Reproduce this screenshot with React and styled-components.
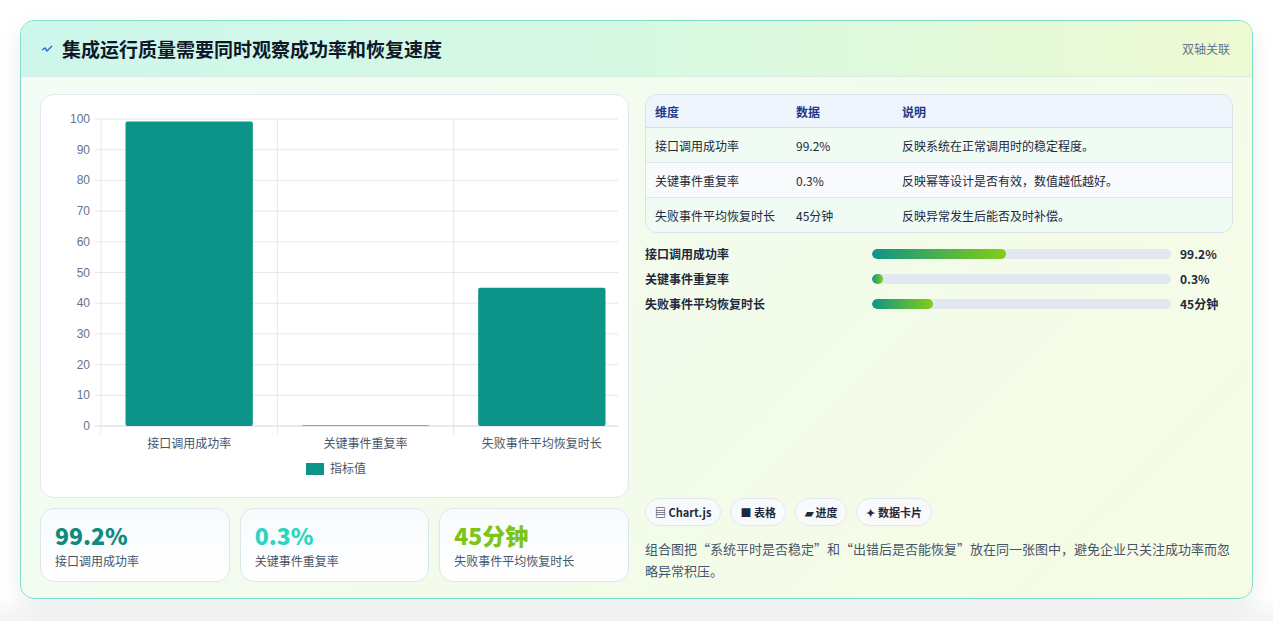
import styled, { createGlobalStyle } from "styled-components";

const Global = createGlobalStyle`
  body { margin: 0; background: #fff; font-family: "Noto Sans CJK SC", "Noto Sans", sans-serif; }
`;

const Page = styled.div`
  padding: 20px 20px 22px 20px;
  height: 621px;
  box-sizing: border-box;
  background: linear-gradient(#fff 96%, #f1f3f5);
`;

const Card = styled.div`
  border: 1px solid #7ee0c8;
  border-radius: 14px;
  overflow: hidden;
  background: linear-gradient(135deg, #f2fdf6 0%, #f3fbea 60%, #f6fce4 100%);
  box-shadow: 0 8px 24px rgba(15, 23, 42, 0.08);
  height: 579px;
  box-sizing: border-box;
`;

const Header = styled.div`
  height: 55px;
  display: flex;
  align-items: center;
  justify-content: space-between;
  padding: 0 22px 0 20px;
  background: linear-gradient(90deg, #cdf7ec 0%, #d6f8e2 50%, #eefad2 100%);
  border-bottom: 1px solid #d8f0e4;
`;

const Title = styled.h1`
  margin: 0;
  font-size: 19px;
  font-weight: 700;
  color: #0f172a;
  display: flex;
  align-items: center;
  gap: 9px;
`;

const Tag = styled.span`
  font-size: 12px;
  color: #64748b;
`;

const Body = styled.div`
  display: grid;
  grid-template-columns: 589px 1fr;
  gap: 16px;
  padding: 17px 19px 18px 19px;
`;

const Col = styled.div`
  display: flex;
  flex-direction: column;
`;

const ChartCard = styled.div`
  height: 404px;
  box-sizing: border-box;
  background: #fff;
  border: 1px solid #e2e8f0;
  border-radius: 14px;
  padding: 14px 12px 0 12px;
`;

const Stats = styled.div`
  display: grid;
  grid-template-columns: repeat(3, 1fr);
  gap: 10px;
  margin-top: 10px;
`;

const Stat = styled.div`
  height: 74px;
  box-sizing: border-box;
  border: 1px solid #dbe7ef;
  border-radius: 14px;
  background: linear-gradient(#f8fafc, #fff);
  padding: 12px 14px;
`;

const StatValue = styled.div`
  font-size: 23px;
  font-weight: 800;
  line-height: 28px;
  color: ${(p) => p.$c};
`;

const StatLabel = styled.div`
  font-size: 12px;
  color: #475569;
  margin-top: 3px;
`;

const Table = styled.table`
  width: 100%;
  border-collapse: separate;
  border-spacing: 0;
  border: 1px solid #d5e2ec;
  border-radius: 12px;
  overflow: hidden;
  font-size: 12px;
  color: #1e293b;
`;

const Th = styled.th`
  text-align: left;
  font-weight: 700;
  color: #1e3a8a;
  background: #eef5fd;
  height: 32px;
  padding: 0 9px;
  border-bottom: 1px solid #d5e2ec;
`;

const Td = styled.td`
  height: 34px;
  padding: 0 9px;
  background: ${(p) => (p.$alt ? "#f8fafc" : "#f0fbf4")};
  border-top: ${(p) => (p.$first ? "none" : "1px solid #e2e8f0")};
`;

const Bars = styled.div`
  display: flex;
  flex-direction: column;
  gap: 12px;
  margin-top: 12px;
`;

const BarRow = styled.div`
  display: grid;
  grid-template-columns: 218px 299px 1fr;
  gap: 9px;
  align-items: center;
  font-size: 12px;
  font-weight: 600;
  color: #1e293b;
  height: 13px;
`;

const Track = styled.div`
  height: 10px;
  border-radius: 5px;
  background: #e2e8f0;
  overflow: hidden;
`;

const Fill = styled.div`
  height: 100%;
  border-radius: 5px;
  background: linear-gradient(90deg, #0f9488, #84cc16);
`;

const Chips = styled.div`
  display: flex;
  gap: 9px;
  margin-top: auto;
`;

const Chip = styled.span`
  font-size: 11px;
  font-weight: 600;
  color: #1e293b;
  background: #f8fafc;
  border: 1px solid #e2e8f0;
  border-radius: 14px;
  padding: 5px 9px;
`;

const Note = styled.p`
  margin: 12px 0 0;
  font-size: 13px;
  line-height: 22px;
  color: #475569;
`;

const cats = ["接口调用成功率", "关键事件重复率", "失败事件平均恢复时长"];
const vals = [99.2, 0.3, 45];

function Chart() {
  const x0 = 48, x1 = 577, y0 = 10, y1 = 317;
  const w = (x1 - x0) / 3;
  const sy = (v) => y1 - ((y1 - y0) * v) / 100;
  return (
    <svg width="565" height="380" style={{ fontFamily: "Noto Sans CJK SC, sans-serif" }}>
      {[0, 10, 20, 30, 40, 50, 60, 70, 80, 90, 100].map((t) => (
        <g key={t}>
          <line x1={x0 - 6} x2={x1} y1={sy(t)} y2={sy(t)} stroke={t === 0 ? "#cbd5e1" : "#e5e7eb"} />
          <text x={x0 - 11} y={sy(t) + 4} fontSize="12" fill="#64748b" textAnchor="end" fontFamily="Liberation Sans">{t}</text>
        </g>
      ))}
      {[0, 1, 2, 3].map((i) => (
        <line key={i} x1={x0 + i * w} x2={x0 + i * w} y1={y0} y2={y1 + 8} stroke="#e5e7eb" />
      ))}
      {vals.map((v, i) => (
        <rect key={i} x={x0 + i * w + 24.5} y={sy(v)} width={w - 49} height={Math.max(y1 - sy(v), 1)} rx="2" fill="#0d9488" opacity={i === 1 ? 0.6 : 1} />
      ))}
      {cats.map((c, i) => (
        <text key={c} x={x0 + i * w + w / 2} y={y1 + 22} fontSize="12" fill="#475569" textAnchor="middle">{c}</text>
      ))}
      <rect x="253" y="354" width="18" height="12" fill="#0d9488" />
      <text x="277" y="364" fontSize="12" fill="#475569">指标值</text>
    </svg>
  );
}

const rows = [
  ["接口调用成功率", "99.2%", "反映系统在正常调用时的稳定程度。"],
  ["关键事件重复率", "0.3%", "反映幂等设计是否有效，数值越低越好。"],
  ["失败事件平均恢复时长", "45分钟", "反映异常发生后能否及时补偿。"],
];
const fills = [134, 11, 61];

export default function App() {
  return (
    <Page>
      <Global />
      <Card>
        <Header>
          <Title>
            <svg width="12" height="10" viewBox="0 0 12 10">
              <path d="M1 6 L4 4 L6 7 L11 2" stroke="#2563eb" strokeWidth="1.4" fill="none" />
            </svg>
            集成运行质量需要同时观察成功率和恢复速度
          </Title>
          <Tag>双轴关联</Tag>
        </Header>
        <Body>
          <Col>
            <ChartCard>
              <Chart />
            </ChartCard>
            <Stats>
              <Stat><StatValue $c="#0f8a7e">99.2%</StatValue><StatLabel>接口调用成功率</StatLabel></Stat>
              <Stat><StatValue $c="#2dd4bf">0.3%</StatValue><StatLabel>关键事件重复率</StatLabel></Stat>
              <Stat><StatValue $c="#7cc41a">45分钟</StatValue><StatLabel>失败事件平均恢复时长</StatLabel></Stat>
            </Stats>
          </Col>
          <Col>
            <Table>
              <thead>
                <tr>
                  <Th style={{ width: 123 }}>维度</Th>
                  <Th style={{ width: 88 }}>数据</Th>
                  <Th>说明</Th>
                </tr>
              </thead>
              <tbody>
                {rows.map((r, i) => (
                  <tr key={i}>
                    {r.map((c, j) => (
                      <Td key={j} $alt={i === 1} $first={i === 0}>{c}</Td>
                    ))}
                  </tr>
                ))}
              </tbody>
            </Table>
            <Bars>
              {rows.map((r, i) => (
                <BarRow key={i}>
                  <span>{r[0]}</span>
                  <Track><Fill style={{ width: fills[i] }} /></Track>
                  <span>{r[1]}</span>
                </BarRow>
              ))}
            </Bars>
            <Chips>
              <Chip>▤ Chart.js</Chip>
              <Chip>■ 表格</Chip>
              <Chip>▰ 进度</Chip>
              <Chip>✦ 数据卡片</Chip>
            </Chips>
            <Note>组合图把“系统平时是否稳定”和“出错后是否能恢复”放在同一张图中，避免企业只关注成功率而忽略异常积压。</Note>
          </Col>
        </Body>
      </Card>
    </Page>
  );
}
